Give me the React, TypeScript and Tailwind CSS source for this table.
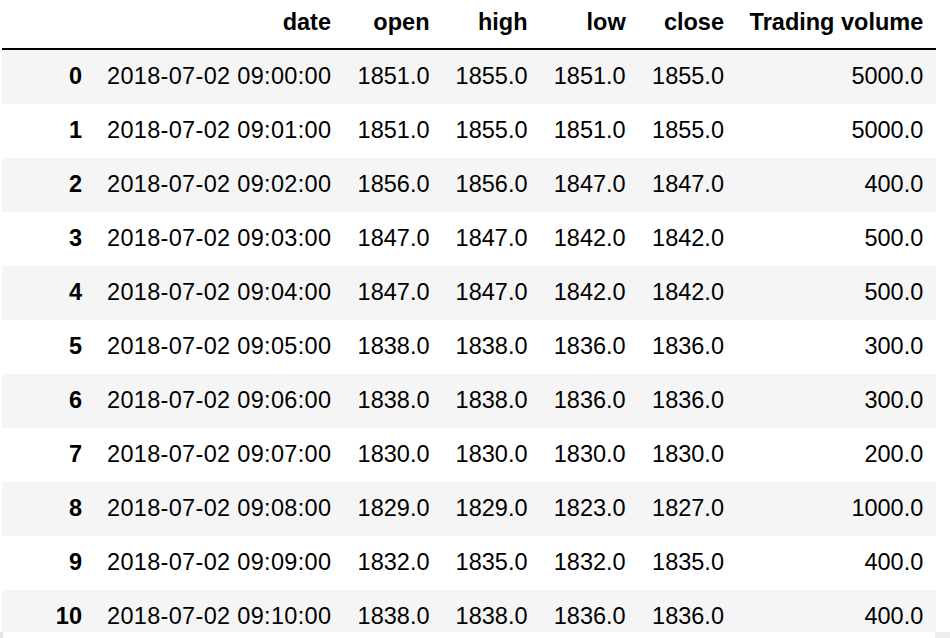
import React from "react";

const rows: [string, string, string, string, string, string][] = [
  ["2018-07-02 09:00:00", "1851.0", "1855.0", "1851.0", "1855.0", "5000.0"],
  ["2018-07-02 09:01:00", "1851.0", "1855.0", "1851.0", "1855.0", "5000.0"],
  ["2018-07-02 09:02:00", "1856.0", "1856.0", "1847.0", "1847.0", "400.0"],
  ["2018-07-02 09:03:00", "1847.0", "1847.0", "1842.0", "1842.0", "500.0"],
  ["2018-07-02 09:04:00", "1847.0", "1847.0", "1842.0", "1842.0", "500.0"],
  ["2018-07-02 09:05:00", "1838.0", "1838.0", "1836.0", "1836.0", "300.0"],
  ["2018-07-02 09:06:00", "1838.0", "1838.0", "1836.0", "1836.0", "300.0"],
  ["2018-07-02 09:07:00", "1830.0", "1830.0", "1830.0", "1830.0", "200.0"],
  ["2018-07-02 09:08:00", "1829.0", "1829.0", "1823.0", "1827.0", "1000.0"],
  ["2018-07-02 09:09:00", "1832.0", "1835.0", "1832.0", "1835.0", "400.0"],
  ["2018-07-02 09:10:00", "1838.0", "1838.0", "1836.0", "1836.0", "400.0"],
];

const grid = "grid grid-cols-[80px_249px_98.5px_98px_98.2px_98.3px_199.3px]";

export default function App() {
  return (
    <div
      className="w-[950px] h-[638px] bg-white text-black overflow-hidden relative"
      style={{ fontFamily: '"Liberation Sans", Arial, sans-serif' }}
    >
      <div className="h-[632px] overflow-hidden pl-[2px]">
        <div className="w-[934px] text-[23.5px]">
          <div className={`${grid} h-[50px] items-center pb-[3px] font-bold border-b-2 border-black`}>
            <div className="text-right"></div>
            <div className="text-right">date</div>
            <div className="text-right">open</div>
            <div className="text-right">high</div>
            <div className="text-right">low</div>
            <div className="text-right">close</div>
            <div className="text-right">Trading volume</div>
          </div>
          {rows.map((r, i) => (
            <div
              key={i}
              className={`${grid} h-[54px] items-center ${i % 2 === 0 ? "bg-[#f5f5f5]" : "bg-white"}`}
            >
              <div className="text-right font-bold">{i}</div>
              {r.map((c, j) => (
                <div
                  key={j}
                  className={`text-right whitespace-nowrap ${j === 0 ? "tracking-[0.32px] -mr-[0.32px]" : ""}`}
                >
                  {c}
                </div>
              ))}
            </div>
          ))}
        </div>
      </div>
      <div className="absolute left-0 bottom-0 w-[3px] h-[6px] bg-[#e6e6e6]"></div>
      <div className="absolute right-0 bottom-0 w-[15px] h-[6px] bg-[#ededed]"></div>
    </div>
  );
}
